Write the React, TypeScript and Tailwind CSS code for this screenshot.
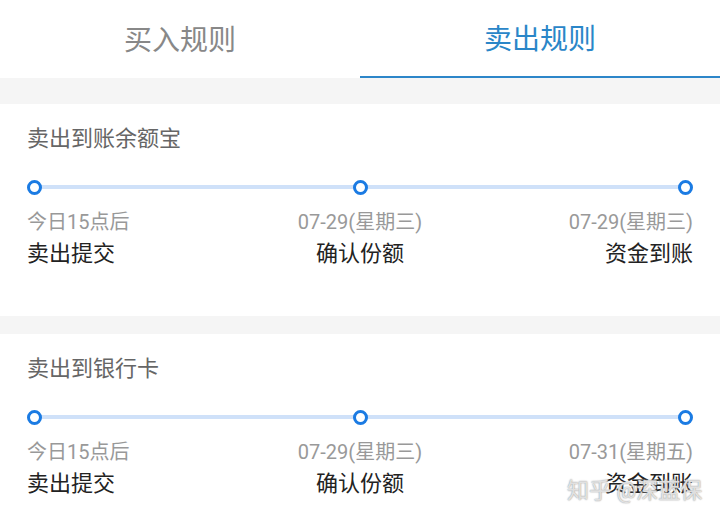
const font = { fontFamily: 'Roboto, "Noto Sans CJK SC", "Noto Sans", sans-serif' }

type Step = { date: string; label: string }

function Timeline({ title, steps }: { title: string; steps: Step[] }) {
  return (
    <div className="bg-white px-[27px] pt-[20px] pb-[47px]">
      <div className="text-[22px] leading-[30px] text-[#666]">{title}</div>

      {/* dots + line */}
      <div className="relative mt-[26px] flex h-[15px] items-center justify-between">
        <div className="absolute left-[7px] right-[7px] top-[5px] h-[4px] bg-[#cfe1f9]" />
        {steps.map((_, i) => (
          <div key={i} className="relative h-[15px] w-[15px] rounded-full border-[3px] border-[#1b7be3] bg-white" />
        ))}
      </div>

      <div className="mt-[13px] grid grid-cols-3">
        {steps.map((s, i) => (
          <div
            key={i}
            className={i === 0 ? "text-left" : i === 1 ? "text-center" : "text-right"}
          >
            <div className="text-[20px] leading-[28px] text-[#999]">{s.date}</div>
            <div className="mt-[3px] text-[22px] leading-[30px] text-[#222]">{s.label}</div>
          </div>
        ))}
      </div>
    </div>
  )
}

export default function App() {
  return (
    <div className="relative h-[519px] w-[720px] overflow-hidden bg-[#f5f5f5]" style={font}>
      {/* Tabs */}
      <div className="flex h-[78px] bg-white">
        <div className="flex flex-1 items-center justify-center pt-[4px] text-[28px] text-[#888]">买入规则</div>
        <div className="flex flex-1 items-center justify-center border-b-2 border-[#2c86c9] pt-[4px] text-[28px] text-[#2a86c8]">
          卖出规则
        </div>
      </div>

      <div className="mt-[26px] flex flex-col gap-[18px]">
        <Timeline
          title="卖出到账余额宝"
          steps={[
            { date: "今日15点后", label: "卖出提交" },
            { date: "07-29(星期三)", label: "确认份额" },
            { date: "07-29(星期三)", label: "资金到账" },
          ]}
        />
        <Timeline
          title="卖出到银行卡"
          steps={[
            { date: "今日15点后", label: "卖出提交" },
            { date: "07-29(星期三)", label: "确认份额" },
            { date: "07-31(星期五)", label: "资金到账" },
          ]}
        />
      </div>

      {/* watermark */}
      <div className="absolute left-[567px] top-[476px] text-[22px] leading-[30px] text-white/70 [text-shadow:0_0_1px_#999,0_0_2px_#bbb]">
        知乎 @深蓝保
      </div>
    </div>
  )
}
